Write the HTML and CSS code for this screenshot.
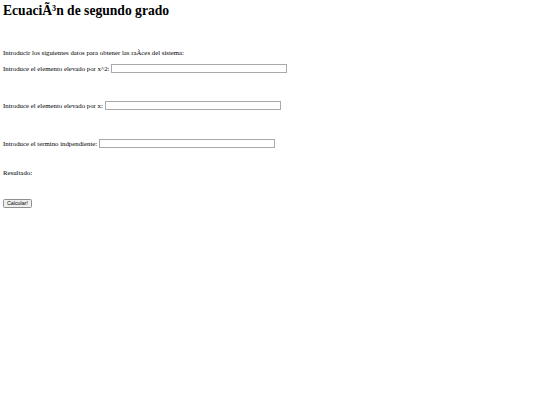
FILE: index.html
```html
<!DOCTYPE html>
<html lang="es">
<head>
<meta charset="utf-8">
<title>Ecuación de segundo grado</title>
<link rel="stylesheet" href="styles.css">
</head>
<body>
<h1 class="title">EcuaciÃ³n de segundo grado</h1>
<form class="form">
  <p class="intro">Introducir los siguientes datos para obtener las raÃ&shy;ces del sistema:</p>
  <div class="row row-a"><label>Introduce el elemento elevado por x^2:</label><input class="field" type="text"></div>
  <div class="row row-b"><label>Introduce el elemento elevado por x:</label><input class="field" type="text"></div>
  <div class="row row-c"><label>Introduce el termino indpendiente:</label><input class="field" type="text"></div>
  <p class="result">Resultado:</p>
  <div class="actions"><button class="btn" type="button">Calcular!</button></div>
</form>
</body>
</html>
```
FILE: styles.css
```css
html, body {
  margin: 0;
  padding: 0;
  background: #fff;
}
body {
  padding: 2px 3px;
  font-family: "Liberation Serif", "Times New Roman", serif;
  font-size: 6.8px;
  color: #000;
}
.title {
  margin: 0;
  font-size: 13.6px;
  line-height: 17px;
  font-weight: bold;
}
.form {
  display: flex;
  flex-direction: column;
  align-items: flex-start;
}
.intro, .result {
  margin: 0;
  line-height: 9px;
}
.intro { margin-top: 29px; }
.row {
  display: flex;
  align-items: center;
  gap: 2px;
  height: 9px;
  line-height: 9px;
}
.row-a { margin-top: 7px; }
.row-b { margin-top: 28px; }
.row-c { margin-top: 29px; }
.result { margin-top: 20px; }
.actions { margin-top: 22px; }
.field {
  box-sizing: border-box;
  width: 176px;
  height: 9px;
  margin: 0;
  padding: 0;
  border: 1px solid #a9a9a9;
  background: #fff;
}
.btn {
  box-sizing: border-box;
  height: 9px;
  margin: 0;
  padding: 0 3px;
  font-family: "Liberation Sans", Arial, sans-serif;
  font-size: 5.3px;
  line-height: 7px;
  color: #000;
  background: #efefef;
  border: 1px solid #8f8f8f;
  border-radius: 1.5px;
}
```
